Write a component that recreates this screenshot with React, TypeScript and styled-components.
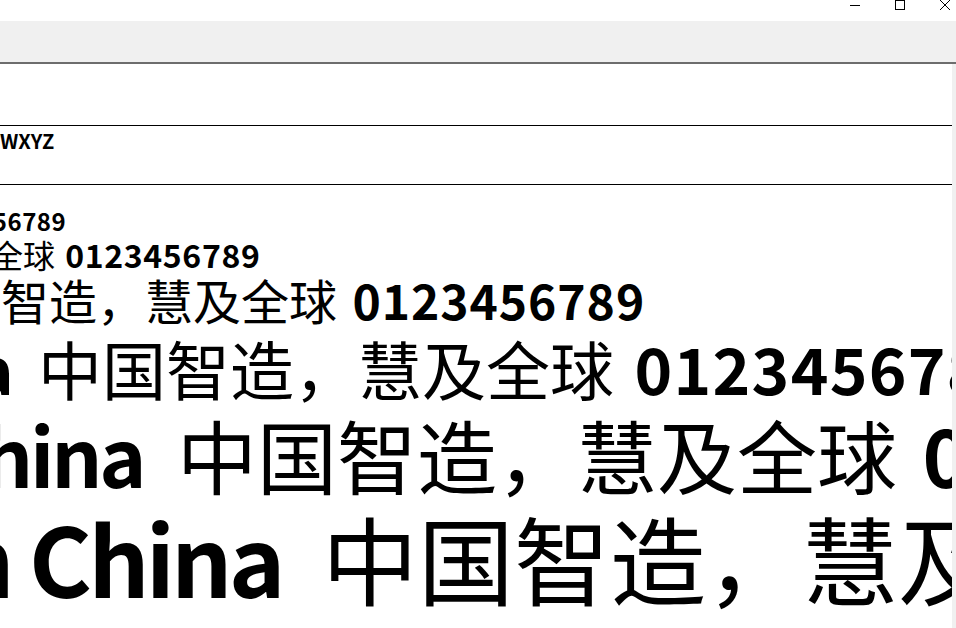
import React from "react";
import styled, { createGlobalStyle } from "styled-components";

const Global = createGlobalStyle`
  html, body { margin: 0; padding: 0; background: #ffffff; overflow: hidden; }
  body { font-family: "Noto Sans CJK SC", "Noto Sans", sans-serif; color: #000; }
  #root { width: 956px; height: 628px; }
`;

const Window = styled.div`
  width: 956px;
  height: 628px;
  display: flex;
  flex-direction: column;
  overflow: hidden;
  background: #ffffff;
`;

const TitleBar = styled.div`
  flex: none;
  height: 21px;
  display: flex;
  justify-content: flex-end;
  align-items: flex-start;
  gap: 35px;
  padding-right: 6px;
  background: #ffffff;
`;

const Caption = styled.svg`
  display: block;
  width: 10px;
  height: 10px;
  flex: none;
`;

const Toolbar = styled.div`
  flex: none;
  height: 41px;
  background: #f0f0f0;
  border-bottom: 2px solid #6d6d6d;
`;

const Body = styled.div`
  flex: 1;
  min-height: 0;
  display: flex;
`;

const Content = styled.div`
  flex: 1;
  min-width: 0;
  display: flex;
  flex-direction: column;
  overflow: hidden;
`;

const ScrollStrip = styled.div`
  flex: none;
  width: 4px;
  background: #f0f0f0;
`;

const HeaderRow = styled.div`
  flex: none;
  height: 61px;
  border-bottom: 1px solid #000;
`;

const AlphaRow = styled.div`
  flex: none;
  height: 59px;
  box-sizing: border-box;
  padding-top: 3px;
  border-bottom: 1px solid #000;
  display: flex;
  align-items: flex-start;
  font-size: 20px;
  line-height: 24px;
  font-weight: 700;
`;

const Samples = styled.div`
  flex: 1;
  display: flex;
  flex-direction: column;
`;

const SampleRow = styled.div<{ $size: number; $h: number }>`
  flex: none;
  height: ${(p) => p.$h}px;
  display: flex;
  align-items: flex-end;
  font-size: ${(p) => p.$size}px;
  line-height: 1;
`;

const Track = styled.div<{ $x: number }>`
  flex: none;
  display: flex;
  margin-left: ${(p) => p.$x}px;
  white-space: pre;
`;

const Lead = styled.span`
  flex: none;
  width: 0;
  display: flex;
  justify-content: flex-end;
  white-space: pre;
`;

const Latin = styled.span`
  font-weight: 700;
  letter-spacing: -0.04em;
`;

const Han = styled.span`
  font-weight: 400;
`;

const Gap = styled.span<{ $w: number }>`
  flex: none;
  width: ${(p) => p.$w}em;
`;

const Digits = styled.span`
  font-weight: 700;
  letter-spacing: 0.02em;
`;

const rows = [
  { size: 16, h: 20, x: -400 },
  { size: 24, h: 27.5, x: -304 },
  { size: 32, h: 37.5, x: -233 },
  { size: 48, h: 53, x: -95 },
  { size: 64, h: 76, x: 38 },
  { size: 80, h: 94, x: 177 },
  { size: 96, h: 112, x: 322 },
];

export default function App() {
  return (
    <>
      <Global />
      <Window>
        <TitleBar>
          <Caption viewBox="0 0 10 10">
            <line x1="0" y1="5.5" x2="10" y2="5.5" stroke="#000" strokeWidth="1" />
          </Caption>
          <Caption viewBox="0 0 10 10">
            <rect x="0.5" y="0.5" width="9" height="9" fill="none" stroke="#000" strokeWidth="1" />
          </Caption>
          <Caption viewBox="0 0 10 10">
            <path d="M0 0 L10 10 M10 0 L0 10" stroke="#000" strokeWidth="1" fill="none" />
          </Caption>
        </TitleBar>
        <Toolbar />
        <Body>
          <Content>
            <HeaderRow />
            <AlphaRow>
              <Track $x={0}>
                <Lead>abcdefghijklmnopqrstuvwxyz ABCDEFGHIJKLMNOPQRSTUV</Lead>
                <span>WXYZ</span>
              </Track>
            </AlphaRow>
            <Samples>
              {rows.map((r) => (
                <SampleRow key={r.size} $size={r.size} $h={r.h}>
                  <Track $x={r.x}>
                    <Lead>
                      <Latin>Made in China</Latin>
                      <Gap $w={0.42} />
                    </Lead>
                    <Han>中国智造，慧及全球</Han>
                    <Gap $w={0.32} />
                    <Digits>0123456789</Digits>
                  </Track>
                </SampleRow>
              ))}
            </Samples>
          </Content>
          <ScrollStrip />
        </Body>
      </Window>
    </>
  );
}
